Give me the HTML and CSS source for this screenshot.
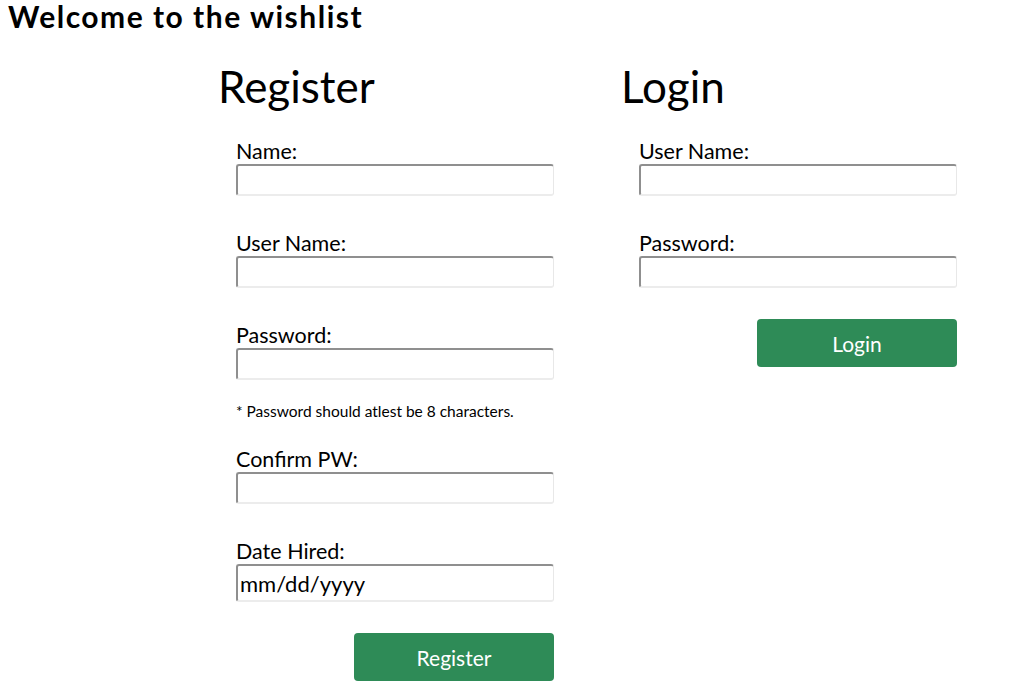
FILE: index.html
```html
<!DOCTYPE html>
<html>
<head>
<meta charset="utf-8">
<link rel="stylesheet" href="styles.css">
</head>
<body>
<h1 class="title">Welcome to the wishlist</h1>
<div class="forms">
  <form class="col col-register">
    <h2 class="heading">Register</h2>
    <div class="fields">
      <div class="field">
        <label class="label">Name:</label>
        <input class="input" type="text">
      </div>
      <div class="field">
        <label class="label">User Name:</label>
        <input class="input" type="text">
      </div>
      <div class="field field-pw">
        <label class="label">Password:</label>
        <input class="input" type="password">
        <p class="note">* Password should atlest be 8 characters.</p>
      </div>
      <div class="field">
        <label class="label">Confirm PW:</label>
        <input class="input" type="password">
      </div>
      <div class="field">
        <label class="label">Date Hired:</label>
        <div class="input input-date">mm/dd/yyyy</div>
      </div>
      <div class="actions">
        <button class="btn" type="button">Register</button>
      </div>
    </div>
  </form>
  <form class="col col-login">
    <h2 class="heading">Login</h2>
    <div class="fields">
      <div class="field">
        <label class="label">User Name:</label>
        <input class="input" type="text">
      </div>
      <div class="field">
        <label class="label">Password:</label>
        <input class="input" type="password">
      </div>
      <div class="actions">
        <button class="btn" type="button">Login</button>
      </div>
    </div>
  </form>
</div>
</body>
</html>
```
FILE: styles.css
```css
html, body {
  margin: 0;
  padding: 0;
  background: #fff;
  color: #000;
  font-family: Lato, "Open Sans", sans-serif;
}
body {
  padding: 0 8px;
}
.title {
  margin: 0;
  font-size: 30px;
  font-weight: 700;
  letter-spacing: 1.5px;
  line-height: 32px;
}
.forms {
  display: flex;
  margin-left: 210px;
  margin-top: 29px;
}
.col {
  margin: 0;
}
.col-register {
  width: 403px;
}
.col-login {
  width: 340px;
}
.heading {
  margin: 0;
  font-size: 44px;
  font-weight: 400;
  line-height: 50px;
}
.fields {
  display: flex;
  flex-direction: column;
  padding-left: 18px;
  margin-top: 28px;
}
.field {
  display: flex;
  flex-direction: column;
  margin-bottom: 35px;
}
.field-pw {
  margin-bottom: 28px;
}
.label {
  font-size: 21.5px;
  line-height: 25px;
}
.input {
  box-sizing: border-box;
  width: 318px;
  height: 32px;
  margin: 0;
  border-width: 2px 1px 2px 2px;
  border-style: solid;
  border-color: #8f8f8f #e8e8e8 #ececec #8f8f8f;
  border-radius: 3px;
  background: #fff;
  font-family: inherit;
  font-size: 20px;
  padding: 0 3px;
}
.input-date {
  height: 38px;
  display: flex;
  align-items: center;
  font-size: 22px;
  padding: 0 2px;
}
.note {
  margin: 23px 0 0;
  font-size: 15.5px;
  line-height: 16px;
}
.actions {
  display: flex;
  justify-content: flex-end;
  width: 318px;
  margin-top: -4px;
}
.btn {
  width: 200px;
  height: 48px;
  border: none;
  border-radius: 4px;
  background: #2e8b57;
  color: #fff;
  font-family: inherit;
  font-size: 21px;
  padding: 0;
}
```
